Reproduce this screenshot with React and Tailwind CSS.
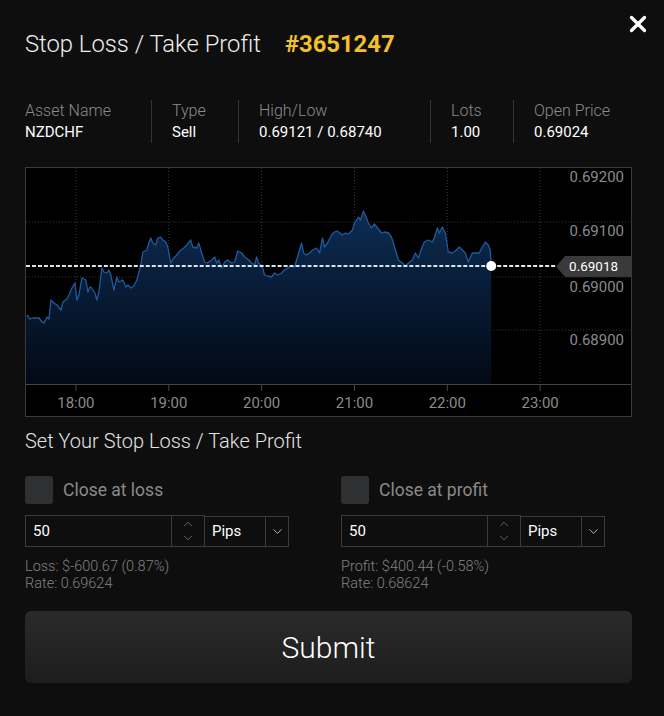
import { X, ChevronUp, ChevronDown } from 'lucide-react';

const pts = [
  [27, 315], [30, 319], [33, 318], [37, 318], [39, 318], [42, 322], [44, 323], [47, 317], [49, 319],
  [51, 300], [54, 303], [57, 305], [61, 310], [63, 302], [67, 299], [69, 295], [72, 288], [75, 283],
  [77, 300], [79, 295], [82, 278], [86, 280], [88, 292], [90, 287], [92, 288], [95, 293], [97, 300],
  [99, 292], [102, 268], [104, 272], [107, 273], [109, 270], [111, 275], [114, 290], [117, 277],
  [119, 282], [121, 281], [123, 280], [126, 287], [128, 285], [131, 288], [134, 286], [137, 280],
  [141, 265], [143, 252], [147, 250], [149, 243], [151, 238], [153, 243], [156, 245], [158, 238],
  [161, 237], [163, 240], [166, 242], [168, 247], [171, 263], [174, 258], [177, 255], [181, 250],
  [184, 248], [187, 245], [191, 240], [193, 247], [197, 248], [199, 243], [202, 253], [205, 262],
  [208, 263], [212, 260], [215, 257], [217, 263], [219, 260], [222, 268], [225, 262], [228, 260],
  [232, 263], [235, 262], [238, 251], [242, 253], [245, 257], [248, 259], [252, 263], [255, 265],
  [257, 257], [259, 263], [263, 268], [265, 275], [268, 276], [272, 277], [275, 273], [278, 275],
  [282, 273], [285, 270], [288, 268], [292, 266], [295, 267], [297, 260], [300, 250], [302, 243],
  [304, 253], [307, 255], [310, 253], [313, 250], [317, 248], [320, 253], [323, 238], [325, 247],
  [328, 243], [332, 235], [335, 232], [338, 231], [339, 232], [343, 235], [346, 233], [349, 234],
  [353, 230], [355, 223], [359, 217], [361, 220], [364, 211], [367, 218], [369, 223], [372, 228],
  [375, 224], [379, 229], [382, 233], [385, 232], [389, 233], [392, 237], [394, 243], [397, 253],
  [399, 260], [403, 263], [406, 266], [409, 263], [413, 260], [416, 253], [419, 258], [422, 249],
  [425, 242], [429, 240], [433, 242], [435, 238], [438, 228], [440, 233], [443, 227], [446, 233],
  [449, 252], [453, 253], [457, 250], [460, 247], [463, 250], [466, 253], [469, 262], [473, 253],
  [476, 253], [480, 253], [483, 247], [486, 242], [489, 245], [491, 250], [492, 266],
];

const line = pts.map((p) => p.join(',')).join(' ');
const area = `26,318 ${line} 492,384 26,384`;

const times = [
  [76, '18:00'], [169, '19:00'], [262, '20:00'], [355, '21:00'], [448, '22:00'], [541, '23:00'],
];
const prices = [
  [182, '0.69200'], [236, '0.69100'], [292, '0.69000'], [345, '0.68900'],
];

function Chart() {
  return (
    <div className="mt-[24px] h-[250px] border border-[#3b3b3b] bg-black">
      <svg className="block h-full w-full" viewBox="26 168 606 248" preserveAspectRatio="none">
        <defs>
          <linearGradient id="fill" x1="0" y1="0" x2="0" y2="1">
            <stop offset="0" stopColor="#0d2c52" />
            <stop offset="1" stopColor="#020915" />
          </linearGradient>
        </defs>
        {[222, 277, 330].map((y) => (
          <line key={y} x1="26" x2="632" y1={y} y2={y} stroke="#3a3a3a" strokeDasharray="1 2" />
        ))}
        {times.map(([x]) => (
          <line key={x} x1={x} x2={x} y1="168" y2="384" stroke="#3a3a3a" strokeDasharray="1 2" />
        ))}
        <polygon points={area} fill="url(#fill)" />
        <polyline points={line} fill="none" stroke="#1f5a9c" strokeWidth="1.3" strokeLinejoin="round" />
        <line x1="26" x2="632" y1="384.5" y2="384.5" stroke="#454545" />
        {times.map(([x, t]) => (
          <g key={t}>
            <line x1={x} x2={x} y1="384" y2="391" stroke="#454545" />
            <text x={x} y="408" fill="#8a8a8a" fontSize="15" textAnchor="middle" fontFamily="Roboto">{t}</text>
          </g>
        ))}
        {prices.map(([y, p]) => (
          <text key={p} x="625" y={y} fill="#8a8a8a" fontSize="15" textAnchor="end" fontFamily="Roboto">{p}</text>
        ))}
        <line x1="26" x2="492" y1="266" y2="266" stroke="#d8e4f0" strokeWidth="2" strokeDasharray="4 2" />
        <line x1="492" x2="558" y1="266" y2="266" stroke="#e8e8e8" strokeWidth="2" strokeDasharray="4 2" />
        <circle cx="492" cy="266" r="5" fill="#ffffff" />
        <polygon points="557,266.5 566,256 632,256 632,277 566,277" fill="#3a3a3a" />
        <text x="570" y="271.5" fill="#ffffff" fontSize="13.5" fontFamily="Roboto">0.69018</text>
      </svg>
    </div>
  );
}

function Info({ label, value, first, last }) {
  return (
    <div className={`flex h-full flex-col ${first ? 'w-[127px]' : ''} ${last ? '' : 'border-r border-[#333]'} ${first ? '' : 'pl-5'}`}>
      <span className="mt-[1px] text-[16px] font-light leading-[20px] text-[#8b8b8b]">{label}</span>
      <span className="mt-[1px] text-[15px] leading-[20px] text-white">{value}</span>
    </div>
  );
}

function Side({ label, text, rate }) {
  return (
    <div className="flex flex-col">
      <div className="flex items-center gap-[10px]">
        <div className="h-[28px] w-[28px] rounded-[3px] bg-[#2f3031]" />
        <span className="text-[17.5px] text-[#8a8a8a]">{label}</span>
      </div>
      <div className="mt-[11px] flex items-start">
        <div className="flex h-[32px] w-[147px] items-center border border-[#3b3b3b] pl-[7px] text-[15px] text-white">50</div>
        <div className="flex h-[32px] w-[33px] flex-col items-center justify-center border-y border-r border-[#3b3b3b] text-[#888]">
          <ChevronUp size={14} strokeWidth={1.2} />
          <ChevronDown size={14} strokeWidth={1.2} />
        </div>
        <div className="mt-[1px] flex h-[31px] items-stretch border border-l-0 border-[#3b3b3b]">
          <div className="flex w-[60px] items-center pl-[7px] text-[15px] text-white">Pips</div>
          <div className="flex w-[23px] items-center justify-center border-l border-[#3b3b3b] text-[#ccc]">
            <ChevronDown size={15} strokeWidth={1.4} />
          </div>
        </div>
      </div>
      <div className="mt-[11px] text-[14.5px] font-light leading-[17px] text-[#808080]">
        <div>{text}</div>
        <div>{rate}</div>
      </div>
    </div>
  );
}

export default function App() {
  return (
    <div className="relative min-h-[716px] w-[664px] bg-[#0f0e0f] pl-[25px] pr-[32px] pt-[28px]" style={{ fontFamily: 'Roboto, "Liberation Sans", sans-serif' }}>
      <button className="absolute right-[13px] top-[11px] text-white">
        <X size={26} strokeWidth={3} />
      </button>
      <div className="flex items-baseline">
        <h1 className="text-[23.8px] font-light leading-[32px] text-[#ededed]">Stop Loss / Take Profit</h1>
        <span className="ml-[24px] text-[23.8px] font-bold leading-[32px] text-[#f4c027]">#3651247</span>
      </div>
      <div className="mt-[40px] flex h-[43px] items-stretch">
        <Info first label="Asset Name" value="NZDCHF" />
        <div className="w-[87px]"><Info label="Type" value="Sell" /></div>
        <div className="w-[192px]"><Info label="High/Low" value="0.69121 / 0.68740" /></div>
        <div className="w-[83px]"><Info label="Lots" value="1.00" /></div>
        <Info last label="Open Price" value="0.69024" />
      </div>
      <Chart />
      <h2 className="mt-[11px] text-[20px] font-light leading-[26px] text-[#e4e4e4]">Set Your Stop Loss / Take Profit</h2>
      <div className="mt-[22px] grid grid-cols-[316px_1fr]">
        <Side label="Close at loss" text="Loss: $-600.67 (0.87%)" rate="Rate: 0.69624" />
        <Side label="Close at profit" text="Profit: $400.44 (-0.58%)" rate="Rate: 0.68624" />
      </div>
      <button className="mt-[19px] flex h-[72px] w-full items-center justify-center rounded-[6px] bg-gradient-to-b from-[#2a2a2a] to-[#1d1d1d] text-[30px] font-light text-white">
        Submit
      </button>
    </div>
  );
}
